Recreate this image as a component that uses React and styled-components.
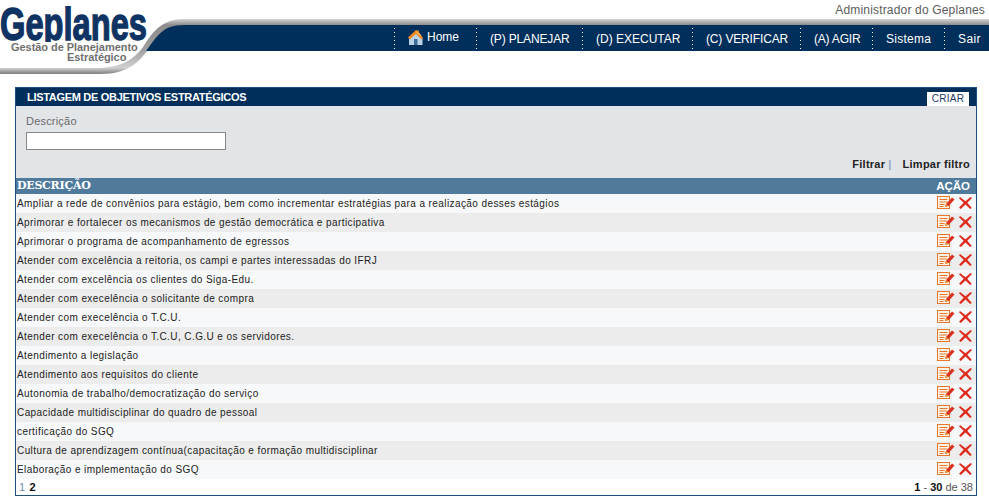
import React from "react";
import styled, { createGlobalStyle } from "styled-components";

const Global = createGlobalStyle`
  html, body { margin: 0; padding: 0; background: #fff; }
  body { font-family: "Liberation Sans", Arial, sans-serif; overflow: hidden; }
`;
const Page = styled.div`width: 989px; height: 500px; overflow: hidden; background: #fff;`;
const Header = styled.header`display: flex; height: 75px;`;
const Brand = styled.div`position: relative; width: 190px; height: 75px; flex: none; overflow: hidden;`;
const Swoosh = styled.svg`position: absolute; left: 0; top: 0;`;
const LogoName = styled.div`
  position: absolute; left: 0; top: 6px; height: 36px; overflow: hidden; font-size: 46px; line-height: 36px; font-weight: 700; color: #0f3463;
  -webkit-text-stroke: 1.4px #0f3463; transform: scaleX(.71); transform-origin: 0 0; white-space: nowrap;
`;
const LogoSub = styled.div`
  position: absolute; top: ${p => p.$top}px; left: ${p => p.$left}px; font-size: 11px; line-height: 11px; font-weight: 700;
  color: #6f6f6f; white-space: nowrap; letter-spacing: -.05px;
`;
const Right = styled.div`flex: 1; display: flex; flex-direction: column;`;
const UserLine = styled.div`height: 19px; text-align: right; padding-right: 4px; font-size: 12px; line-height: 21px; color: #5c5c5c; letter-spacing: .17px;`;
const GreyStripe = styled.div`height: 6px; background: linear-gradient(#d4d4d4, #8c8c8c);`;
const Nav = styled.nav`height: 26px; background: #002f5c; display: flex; justify-content: flex-start; align-items: stretch; padding-left: 204px;`;
const NavItem = styled.a`
  box-sizing: border-box; width: ${p => p.$w}px; flex: none; display: flex; align-items: center; gap: 3px; color: #fff; font-size: 12px; white-space: nowrap;
  padding: ${p => (p.$home ? "0 0 2px 13px" : "2px 0 0 14px")};
  letter-spacing: ${p => p.$ls || 0}px;
  background-image: linear-gradient(#fff 1px, transparent 1px);
  background-size: 1px 4px; background-repeat: repeat-y; background-position: 0 3px;
`;
const Panel = styled.section`box-sizing: border-box; margin: 12px 12px 0 15px; border: 1px solid #1f4f7d; height: 409px; display: flex; flex-direction: column;`;
const TitleBar = styled.div`
  height: 18px; background: #002f5c; display: flex; justify-content: space-between; align-items: center; padding: 0 7px 0 11px; flex: none;
`;
const Title = styled.h1`margin: 0; font-size: 11px; font-weight: 700; color: #fff; line-height: 18px; padding-bottom: 1px; letter-spacing: -.3px;`;
const Create = styled.button`
  width: 42px; height: 14px; padding: 0; border: 0; background: #fff; color: #1c3b5f; font: 10px "Liberation Sans", sans-serif; margin-top: 3px; letter-spacing: .3px;
`;
const Filter = styled.div`box-sizing: border-box; height: 72px; background: #e2e5e8; padding: 9px 6px 0 10px; flex: none; display: flex; flex-direction: column;`;
const Label = styled.label`font-size: 11px; line-height: 13px; color: #6a6a6a; letter-spacing: .2px;`;
const Input = styled.input`width: 200px; height: 18px; box-sizing: border-box; margin-top: 4px; border: 1px solid #888; background: #fff; padding: 0;`;
const Actions = styled.div`display: flex; justify-content: flex-end; margin-top: 8px; font-size: 11px; font-weight: 700; color: #222; line-height: 13px; letter-spacing: .25px;`;
const Pipe = styled.span`color: #8fa8c0; margin: 0 11px 0 3px; font-weight: 700;`;
const HeadRow = styled.div`
  height: 16px; background: #4f7a9c; color: #fff; display: flex; justify-content: space-between; padding: 0 6px 0 1px; flex: none;
  font-family: "DejaVu Serif", serif; font-size: 11px; font-weight: 700; line-height: 16px; letter-spacing: -.25px;
`;
const HeadAction = styled.span`font-family: "Liberation Sans", sans-serif; font-size: 11.5px; letter-spacing: 0;`;
const Row = styled.div`
  height: 19px; flex: none; display: flex; align-items: center; justify-content: space-between; padding: 0 4px 0 1px;
  background: ${p => (p.$alt ? "#ececec" : "#f7f8f9")}; font-size: 10px; color: #222; letter-spacing: .41px;
`;
const RowActions = styled.div`display: flex; gap: 4px; align-items: center; padding-bottom: 2px;`;
const Foot = styled.div`flex: 1; display: flex; justify-content: space-between; align-items: center; padding: 0 3px; font-size: 11px; color: #555;`;
const Pager = styled.span`color: #6d8aa6; letter-spacing: .6px;`;
const Strong = styled.b`color: #111;`;

const EditIcon = () => (
  <svg width="18" height="13" viewBox="0 0 18 13">
    <rect x=".5" y=".5" width="12" height="12" fill="#fff4e6" stroke="#e8762c" />
    <path d="M2.500 3.500h8M2.500 6h8M2.500 8.500h5M2.500 10.500h4" stroke="#e8762c" strokeWidth="1.100" />
    <path d="M8 11l1-3 6-6.500 2.500 2-6 6.500z" fill="#d8301c" />
    <path d="M8 11l1-3 2.400 2z" fill="#f2a23c" />
  </svg>
);
const DelIcon = () => (
  <svg width="13" height="12" viewBox="0 0 13 12">
    <path d="M1 0L6.500 4.200 11.500 0 13 1 8.300 5.800 12.800 11 11.200 12 6.500 7.400 1.800 12 0 10.800 4.700 5.800 0 1.200z" fill="#dd2a1c" />
  </svg>
);
const HomeIcon = () => (
  <svg width="17" height="17" viewBox="0 0 17 17">
    <path d="M2 9L9 2.500 15.500 9V16H2z" fill="#b9d3e6" />
    <path d="M9 1L1 8.500l1.800 2L9 5l5.500 5.500L16 9 12 3.500V1.500H10z" fill="#f08a24" />
    <path d="M8.500 1.500L13 5 15 8 10 4z" fill="#f9c36a" />
    <rect x="7" y="10" width="3.500" height="6" fill="#3f6f99" />
  </svg>
);

const rows = [
  "Ampliar a rede de convênios para estágio, bem como incrementar estratégias para a realização desses estágios",
  "Aprimorar e fortalecer os mecanismos de gestão democrática e participativa",
  "Aprimorar o programa de acompanhamento de egressos",
  "Atender com excelência a reitoria, os campi e partes interessadas do IFRJ",
  "Atender com excelência os clientes do Siga-Edu.",
  "Atender com execelência o solicitante de compra",
  "Atender com execelência o T.C.U.",
  "Atender com execelência o T.C.U, C.G.U e os servidores.",
  "Atendimento a legislação",
  "Atendimento aos requisitos do cliente",
  "Autonomia de trabalho/democratização do serviço",
  "Capacidade multidisciplinar do quadro de pessoal",
  "certificação do SGQ",
  "Cultura de aprendizagem contínua(capacitação e formação multidisciplinar",
  "Elaboração e implementação do SGQ",
];
const nav = [
  { t: "(P) PLANEJAR", w: 106, ls: -.15 },
  { t: "(D) EXECUTAR", w: 110 },
  { t: "(C) VERIFICAR", w: 108, ls: -.15 },
  { t: "(A) AGIR", w: 72, ls: -.2 },
  { t: "Sistema", w: 72, ls: .25 },
  { t: "Sair", w: 45, ls: .4 },
];

export default function App() {
  return (
    <Page>
      <Global />
      <Header>
        <Brand>
          <Swoosh width="190" height="75" viewBox="0 0 190 75">
            <defs>
              <linearGradient id="sw" gradientUnits="userSpaceOnUse" x1="0" y1="19" x2="0" y2="74">
                <stop offset="0" stopColor="#d4d4d4" />
                <stop offset=".11" stopColor="#8c8c8c" />
                <stop offset=".55" stopColor="#a0a0a0" />
                <stop offset=".89" stopColor="#d0d0d0" />
                <stop offset="1" stopColor="#7d7d7d" />
              </linearGradient>
            </defs>
            <path d="M0 68H95C118 68 132 62 143 47 150 37 158 20 182 19H190V51H147C140 60 130 74 100 74H0Z" fill="url(#sw)" />
            <path d="M146 51C152 43 157 35 163 31 169 26 175 25 190 25V51Z" fill="#002f5c" />
          </Swoosh>
          <LogoName>Geplanes</LogoName>
          <LogoSub $top={42} $left={11}>Gestão de Planejamento</LogoSub>
          <LogoSub $top={52} $left={67}>Estratégico</LogoSub>
        </Brand>
        <Right>
          <UserLine>Administrador do Geplanes</UserLine>
          <GreyStripe />
          <Nav>
            <NavItem $home $w={82}><HomeIcon />Home</NavItem>
            {nav.map(n => <NavItem key={n.t} $w={n.w} $ls={n.ls}>{n.t}</NavItem>)}
          </Nav>
        </Right>
      </Header>
      <Panel>
        <TitleBar>
          <Title>LISTAGEM DE OBJETIVOS ESTRATÉGICOS</Title>
          <Create>CRIAR</Create>
        </TitleBar>
        <Filter>
          <Label>Descrição</Label>
          <Input />
          <Actions>Filtrar<Pipe>|</Pipe>Limpar filtro</Actions>
        </Filter>
        <HeadRow><span>DESCRIÇÃO</span><HeadAction>AÇÃO</HeadAction></HeadRow>
        {rows.map((r, i) => (
          <Row key={r} $alt={i % 2 === 1}>
            <span>{r}</span>
            <RowActions><EditIcon /><DelIcon /></RowActions>
          </Row>
        ))}
        <Foot>
          <Pager>1 <Strong>2</Strong></Pager>
          <span><Strong>1</Strong> - <Strong>30</Strong> de 38</span>
        </Foot>
      </Panel>
    </Page>
  );
}
